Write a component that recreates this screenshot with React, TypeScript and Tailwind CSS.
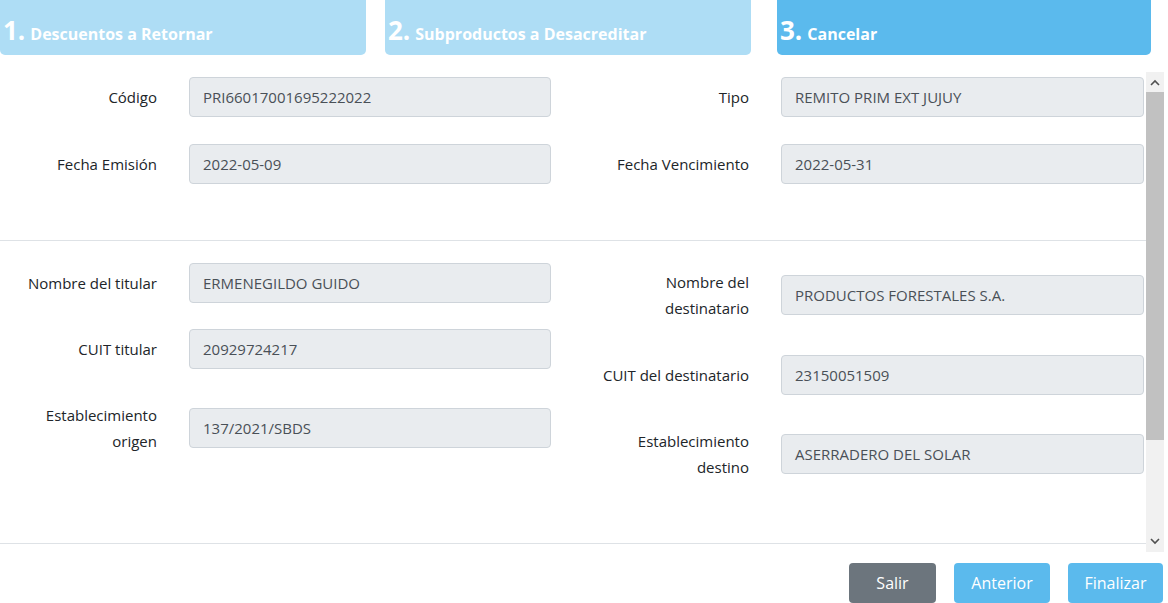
import React from "react";

const font = { fontFamily: '"Open Sans", "Noto Sans", sans-serif' };

const Field = ({ label, value, h = 40, mt = 0, lw }: { label: string[]; value: string; h?: number; mt?: number; lw: string }) => (
  <div className="flex items-center" style={{ height: h, marginTop: mt }}>
    <div className={`${lw} text-right text-[15px] leading-[26px] text-[#212529] shrink-0`}>
      {label.map((l) => (
        <div key={l}>{l}</div>
      ))}
    </div>
    <div className="ml-8 h-10 flex-1 flex items-center px-[13px] rounded border border-[#ced4da] bg-[#e9ecef] text-[15px] text-[#495057]">
      {value}
    </div>
  </div>
);

const Tab = ({ n, t, active }: { n: string; t: string; active?: boolean }) => (
  <div className={`h-[55px] rounded-b-[5px] flex items-end pb-[12px] pl-[3px] text-white font-bold ${active ? "bg-[#5bbaed] w-[374px]" : "bg-[#aeddf5] w-[366px]"}`}>
    <span className="text-[26px] leading-none">{n}</span>
    <span className="text-[16px] ml-[5px] leading-none pb-[1px]">{t}</span>
  </div>
);

export default function App() {
  return (
    <div className="w-[1168px] h-[603px] bg-white overflow-hidden" style={font}>
      <div className="flex gap-[19px]">
        <Tab n="1." t="Descuentos a Retornar" />
        <div className="w-[373px]"><Tab n="2." t="Subproductos a Desacreditar" /></div>
        <Tab n="3." t="Cancelar" active />
      </div>
      <div className="flex mt-[17px] h-[480px]">
        <div className="w-[1146px]">
          <div className="h-[168px] flex pt-[5px]">
            <div className="w-[551px]">
              <Field lw="w-[157px]" label={["Código"]} value="PRI66017001695222022" />
              <Field lw="w-[157px]" mt={27} label={["Fecha Emisión"]} value="2022-05-09" />
            </div>
            <div className="w-[593px] pl-[0px] ml-[0px]">
              <Field lw="w-[198px]" label={["Tipo"]} value="REMITO PRIM EXT JUJUY" />
              <Field lw="w-[198px]" mt={27} label={["Fecha Vencimiento"]} value="2022-05-31" />
            </div>
          </div>
          <div className="border-t border-[#dee2e6] h-[303px] flex">
            <div className="w-[551px]">
              <Field lw="w-[157px]" mt={22} label={["Nombre del titular"]} value="ERMENEGILDO GUIDO" />
              <Field lw="w-[157px]" mt={26} label={["CUIT titular"]} value="20929724217" />
              <Field lw="w-[157px]" h={52} mt={33} label={["Establecimiento", "origen"]} value="137/2021/SBDS" />
            </div>
            <div className="w-[593px]">
              <Field lw="w-[198px]" h={52} mt={28} label={["Nombre del", "destinatario"]} value="PRODUCTOS FORESTALES S.A." />
              <Field lw="w-[198px]" mt={34} label={["CUIT del destinatario"]} value="23150051509" />
              <Field lw="w-[198px]" h={52} mt={33} label={["Establecimiento", "destino"]} value="ASERRADERO DEL SOLAR" />
            </div>
          </div>
          <div className="border-t border-[#dee2e6]" />
        </div>
        <div className="w-[18px] bg-[#f1f1f1] flex flex-col items-center">
          <svg width="10" height="20" viewBox="0 0 10 20"><path d="M1 13l4-4 4 4" stroke="#505050" strokeWidth="1.6" fill="none" /></svg>
          <div className="w-[18px] h-[348px] bg-[#c1c1c1]" />
          <div className="flex-1" />
          <svg width="10" height="20" viewBox="0 0 10 20"><path d="M1 7l4 4 4-4" stroke="#505050" strokeWidth="1.6" fill="none" /></svg>
        </div>
      </div>
      <div className="flex justify-end gap-[18px] mt-[11px] pr-[5px]">
        <button className="w-[87px] h-10 rounded bg-[#6c757d] text-white text-[16px]">Salir</button>
        <button className="w-[96px] h-10 rounded bg-[#5bbaed] text-white text-[16px]">Anterior</button>
        <button className="w-[95px] h-10 rounded bg-[#5bbaed] text-white text-[16px]">Finalizar</button>
      </div>
    </div>
  );
}
